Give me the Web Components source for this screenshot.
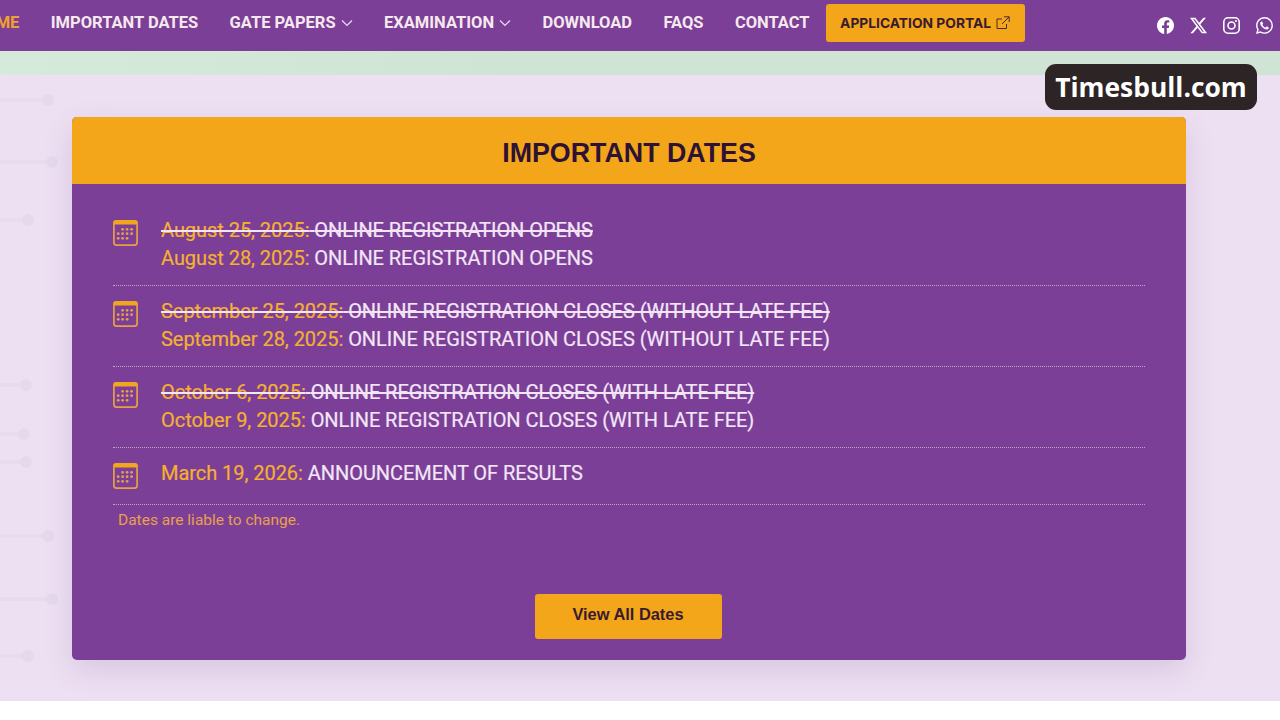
<!DOCTYPE html>
<html lang="en">
<head>
<meta charset="utf-8">
<title>Important Dates</title>
<style>
  html, body { margin: 0; padding: 0; background: #fff; overflow: hidden; }
  body { width: 1280px; height: 720px; font-family: Roboto, "Liberation Sans", sans-serif; }
</style>
</head>
<body>
<site-nav>
  <nav-link active>HOME</nav-link>
  <nav-link>IMPORTANT DATES</nav-link>
  <nav-link caret>GATE PAPERS</nav-link>
  <nav-link caret>EXAMINATION</nav-link>
  <nav-link>DOWNLOAD</nav-link>
  <nav-link>FAQS</nav-link>
  <nav-link>CONTACT</nav-link>
  <portal-button slot="action">APPLICATION PORTAL</portal-button>
  <social-icon slot="social" name="facebook"></social-icon>
  <social-icon slot="social" name="x"></social-icon>
  <social-icon slot="social" name="instagram"></social-icon>
  <social-icon slot="social" name="whatsapp"></social-icon>
</site-nav>
<hero-strip></hero-strip>
<dates-section>
  <water-mark slot="badge">Timesbull.com</water-mark>
  <dates-card heading="IMPORTANT DATES">
    <date-row>
      <date-line struck date="August 25, 2025:">ONLINE REGISTRATION OPENS</date-line>
      <date-line date="August 28, 2025:">ONLINE REGISTRATION OPENS</date-line>
    </date-row>
    <date-row>
      <date-line struck date="September 25, 2025:">ONLINE REGISTRATION CLOSES (WITHOUT LATE FEE)</date-line>
      <date-line date="September 28, 2025:">ONLINE REGISTRATION CLOSES (WITHOUT LATE FEE)</date-line>
    </date-row>
    <date-row>
      <date-line struck date="October 6, 2025:">ONLINE REGISTRATION CLOSES (WITH LATE FEE)</date-line>
      <date-line date="October 9, 2025:">ONLINE REGISTRATION CLOSES (WITH LATE FEE)</date-line>
    </date-row>
    <date-row>
      <date-line date="March 19, 2026:">ANNOUNCEMENT OF RESULTS</date-line>
    </date-row>
    <span slot="note">Dates are liable to change.</span>
    <span slot="action">View All Dates</span>
  </dates-card>
</dates-section>

<script>
class SiteNav extends HTMLElement {
    connectedCallback() {
        this.attachShadow({ mode: 'open' });
        this.shadowRoot.innerHTML = `
            <style>
                :host {
                    display: flex;
                    align-items: center;
                    height: 51px;
                    background: #7c3f98;
                    overflow: hidden;
                }
                .links {
                    display: flex;
                    align-items: center;
                    gap: 31.4px;
                    margin-left: -27.4px;
                    flex: none;
                }
                .action { display: block; margin-left: 16px; flex: none; }
                .social {
                    display: flex;
                    align-items: center;
                    gap: 16px;
                    flex: none;
                    margin-left: auto;
                    margin-right: 7px;
                    margin-top: -1px;
                }
            </style>
            <div class="links"><slot></slot></div>
            <div class="action"><slot name="action"></slot></div>
            <div class="social"><slot name="social"></slot></div>
        `;
    }
}

class NavLink extends HTMLElement {
    connectedCallback() {
        this.attachShadow({ mode: 'open' });
        const caret = this.hasAttribute('caret')
            ? '<svg width="12" height="8" viewBox="0 0 12 8" fill="none" stroke="#e9dcee" stroke-width="1.2"><path d="M1 1.5l5 5 5-5"/></svg>'
            : '';
        this.shadowRoot.innerHTML = `
            <style>
                :host {
                    display: flex;
                    align-items: center;
                    gap: 5px;
                    margin-top: -6px;
                    font: 700 16.5px Roboto, sans-serif;
                    color: #f6e9ee;
                    white-space: nowrap;
                }
                :host([active]) { color: #f0a030; }
            </style>
            <slot></slot>${caret}
        `;
    }
}

class PortalButton extends HTMLElement {
    connectedCallback() {
        this.attachShadow({ mode: 'open' });
        this.shadowRoot.innerHTML = `
            <style>
                :host {
                    display: flex;
                    align-items: center;
                    justify-content: center;
                    gap: 5px;
                    width: 199px;
                    height: 38px;
                    margin-top: -5px;
                    border-radius: 3px;
                    background: #f3a61a;
                    color: #3a1a2e;
                    font: 700 13.8px Inter, "Liberation Sans", sans-serif;
                    white-space: nowrap;
                }
            </style>
            <slot></slot>
            <svg width="14" height="14" viewBox="0 0 14 14" fill="none" stroke="#4a2a2e" stroke-width="1">
                <path d="M10.5 8v4.5h-9.5v-9.5h5M8 .8h5.2V6M13 1L6 8"/>
            </svg>
        `;
    }
}

const SOCIAL_PATHS = {
    facebook: '<path fill="#fff" d="M16 8.049c0-4.446-3.582-8.05-8-8.05C3.58 0-.002 3.603-.002 8.05c0 4.017 2.926 7.347 6.75 7.951v-5.625h-2.03V8.05H6.75V6.275c0-2.017 1.195-3.131 3.022-3.131.876 0 1.791.157 1.791.157v1.98h-1.009c-.993 0-1.303.621-1.303 1.258v1.51h2.218l-.354 2.326H9.25V16c3.824-.604 6.75-3.934 6.75-7.951"/>',
    x: '<path fill="#fff" d="M12.6.75h2.454l-5.36 6.142L16 15.25h-4.937l-3.867-5.07-4.425 5.07H.316l5.733-6.57L0 .75h5.063l3.495 4.633L12.601.75Zm-.86 13.028h1.36L4.323 2.145H2.865z"/>',
    instagram: '<g fill="none" stroke="#fff" stroke-width="1.5"><rect x=".75" y=".75" width="14.5" height="14.5" rx="4"/><circle cx="8" cy="8" r="3.3"/></g><circle cx="12.2" cy="3.8" r="1" fill="#fff"/>',
    whatsapp: '<path fill="#fff" d="M13.601 2.326A7.85 7.85 0 0 0 7.994 0C3.627 0 .068 3.558.064 7.926c0 1.399.366 2.76 1.057 3.965L0 16l4.204-1.102a7.9 7.9 0 0 0 3.79.965h.004c4.368 0 7.926-3.558 7.93-7.93A7.9 7.9 0 0 0 13.6 2.326zM7.994 14.521a6.6 6.6 0 0 1-3.356-.92l-.24-.144-2.494.654.666-2.433-.156-.251a6.56 6.56 0 0 1-1.007-3.505c0-3.626 2.957-6.584 6.591-6.584a6.56 6.56 0 0 1 4.66 1.931 6.56 6.56 0 0 1 1.928 4.66c-.004 3.639-2.961 6.592-6.592 6.592m3.615-4.934c-.197-.099-1.17-.578-1.353-.646-.182-.065-.315-.099-.445.099-.133.197-.513.646-.627.775-.114.133-.232.148-.43.05-.197-.1-.836-.308-1.592-.985-.59-.525-.985-1.175-1.103-1.372-.114-.198-.011-.304.088-.403.087-.088.197-.232.296-.346.1-.114.133-.198.198-.33.065-.134.034-.248-.015-.347-.05-.099-.445-1.076-.612-1.47-.16-.389-.323-.335-.445-.34-.114-.007-.247-.007-.38-.007a.73.73 0 0 0-.529.247c-.182.198-.691.677-.691 1.654s.71 1.916.81 2.049c.098.133 1.394 2.132 3.383 2.992.47.205.84.326 1.129.418.475.152.904.129 1.246.08.38-.058 1.171-.48 1.338-.943.164-.464.164-.86.114-.943-.049-.084-.182-.133-.38-.232"/>'
};

class SocialIcon extends HTMLElement {
    connectedCallback() {
        this.attachShadow({ mode: 'open' });
        this.shadowRoot.innerHTML = `
            <style>
                :host { display: block; width: 17px; height: 17px; }
                svg { display: block; }
            </style>
            <svg width="17" height="17" viewBox="0 0 16 16">${SOCIAL_PATHS[this.getAttribute('name')]}</svg>
        `;
    }
}

class HeroStrip extends HTMLElement {
    connectedCallback() {
        this.attachShadow({ mode: 'open' });
        this.shadowRoot.innerHTML = `
            <style>
                :host {
                    display: block;
                    height: 24px;
                    background: linear-gradient(90deg, #d6eadc 0%, #cfe4d4 40%, #d0e4d5 100%);
                }
            </style>
        `;
    }
}

class DatesSection extends HTMLElement {
    connectedCallback() {
        this.attachShadow({ mode: 'open' });
        const traces = [[100, 48], [162, 52], [220, 28], [385, 26], [434, 24], [462, 26], [536, 48], [599, 52], [656, 28]]
            .map(([y, x]) => {
                const top = y - 75;
                return `<path d="M0 ${top}H${x}" stroke="#e8dbee" stroke-width="4"/><circle cx="${x}" cy="${top}" r="6" fill="#e6d9ec"/>`;
            }).join('');
        this.shadowRoot.innerHTML = `
            <style>
                :host {
                    display: block;
                    position: relative;
                    height: 626px;
                    padding: 42px 94px 0 72px;
                    box-sizing: border-box;
                    background: #eee0f3;
                }
                .traces { position: absolute; left: 0; top: 0; }
                ::slotted([slot="badge"]) { position: absolute; left: 1045px; top: -11px; }
            </style>
            <svg class="traces" width="70" height="626">${traces}</svg>
            <slot></slot>
            <slot name="badge"></slot>
        `;
    }
}

class WaterMark extends HTMLElement {
    connectedCallback() {
        this.attachShadow({ mode: 'open' });
        this.shadowRoot.innerHTML = `
            <style>
                :host {
                    display: flex;
                    align-items: center;
                    justify-content: center;
                    width: 212px;
                    height: 46px;
                    border-radius: 11px;
                    background: #2d2426;
                    color: #fff;
                    font: 700 26.4px "Open Sans", sans-serif;
                    white-space: nowrap;
                }
            </style>
            <slot></slot>
        `;
    }
}

class DatesCard extends HTMLElement {
    connectedCallback() {
        this.attachShadow({ mode: 'open' });
        this.shadowRoot.innerHTML = `
            <style>
                :host {
                    display: block;
                    position: relative;
                    height: 543px;
                    border-radius: 5px;
                    background: #7c3f98;
                    box-shadow: 0 10px 30px rgba(80, 40, 100, 0.14);
                }
                .wrap { border-radius: 5px; overflow: hidden; height: 100%; display: flex; flex-direction: column; }
                header {
                    height: 67px;
                    box-sizing: border-box;
                    padding-top: 6px;
                    display: flex;
                    align-items: center;
                    justify-content: center;
                    background: #f3a61a;
                    color: #2e1236;
                    font: 700 26.8px "Liberation Sans", sans-serif;
                }
                .body { padding: 25px 41px 0; flex: 1; display: flex; flex-direction: column; }
                .note {
                    padding: 6px 5px 0;
                    font: 400 15.5px/18px Roboto, sans-serif;
                    color: #e8a04c;
                }
                .foot { margin-top: auto; padding: 0 2px 21px 0; display: flex; justify-content: center; }
                .btn {
                    width: 187px;
                    height: 45px;
                    box-sizing: border-box;
                    padding-bottom: 5px;
                    display: flex;
                    align-items: center;
                    justify-content: center;
                    border-radius: 3px;
                    background: #f3a61a;
                    color: #3a1a2e;
                    font: 700 16.4px "Liberation Sans", sans-serif;
                }
            </style>
            <div class="wrap">
                <header>${this.getAttribute('heading')}</header>
                <div class="body">
                    <slot></slot>
                    <div class="note"><slot name="note"></slot></div>
                    <div class="foot"><div class="btn"><slot name="action"></slot></div></div>
                </div>
            </div>
        `;
    }
}

class DateRow extends HTMLElement {
    connectedCallback() {
        this.attachShadow({ mode: 'open' });
        this.shadowRoot.innerHTML = `
            <style>
                :host {
                    display: flex;
                    gap: 23px;
                    box-sizing: border-box;
                    min-height: 57px;
                    padding: 12px 0 13px;
                    border-bottom: 1px dotted #bfa6cc;
                }
                :host(:first-child) { padding-top: 0; margin-top: 8px; min-height: 69px; }
                .lines { display: flex; flex-direction: column; margin-top: -1px; }
                calendar-icon { margin-top: 3px; flex: none; }
            </style>
            <calendar-icon></calendar-icon>
            <div class="lines"><slot></slot></div>
        `;
    }
}

class CalendarIcon extends HTMLElement {
    connectedCallback() {
        this.attachShadow({ mode: 'open' });
        const rows = [[9.3, [9, 13.5, 18]], [13.7, [4.6, 9, 13.5, 18]], [18.3, [4.6, 9, 13.5]]];
        const dots = rows.map(([y, xs]) => xs.map(x => `<circle cx="${x + 0.6}" cy="${y}" r="1.35"/>`).join('')).join('');
        this.shadowRoot.innerHTML = `
            <style>
                :host { display: block; width: 25px; height: 26px; }
                svg { display: block; }
            </style>
            <svg width="25" height="26" viewBox="0 0 25 26">
                <rect x=".9" y=".9" width="23.2" height="24.2" rx="2.5" fill="none" stroke="#e8a040" stroke-width="1.7"/>
                <rect x=".5" y=".5" width="24" height="4" rx="1.5" fill="#f3a61a"/>
                <g fill="#e8a04c">${dots}</g>
            </svg>
        `;
    }
}

class DateLine extends HTMLElement {
    connectedCallback() {
        this.attachShadow({ mode: 'open' });
        this.shadowRoot.innerHTML = `
            <style>
                :host {
                    display: block;
                    font: 400 20px/28px Roboto, sans-serif;
                    letter-spacing: -0.05px;
                    -webkit-text-stroke: 0.2px currentColor;
                    color: #f2e6f6;
                    white-space: nowrap;
                }
                :host([struck]) { text-decoration: line-through; }
                .date { color: #f5b12e; }
            </style>
            <span class="date">${this.getAttribute('date')}</span> <slot></slot>
        `;
    }
}

customElements.define('site-nav', SiteNav);
customElements.define('nav-link', NavLink);
customElements.define('portal-button', PortalButton);
customElements.define('social-icon', SocialIcon);
customElements.define('hero-strip', HeroStrip);
customElements.define('dates-section', DatesSection);
customElements.define('water-mark', WaterMark);
customElements.define('dates-card', DatesCard);
customElements.define('date-row', DateRow);
customElements.define('calendar-icon', CalendarIcon);
customElements.define('date-line', DateLine);
</script>
</body>
</html>
